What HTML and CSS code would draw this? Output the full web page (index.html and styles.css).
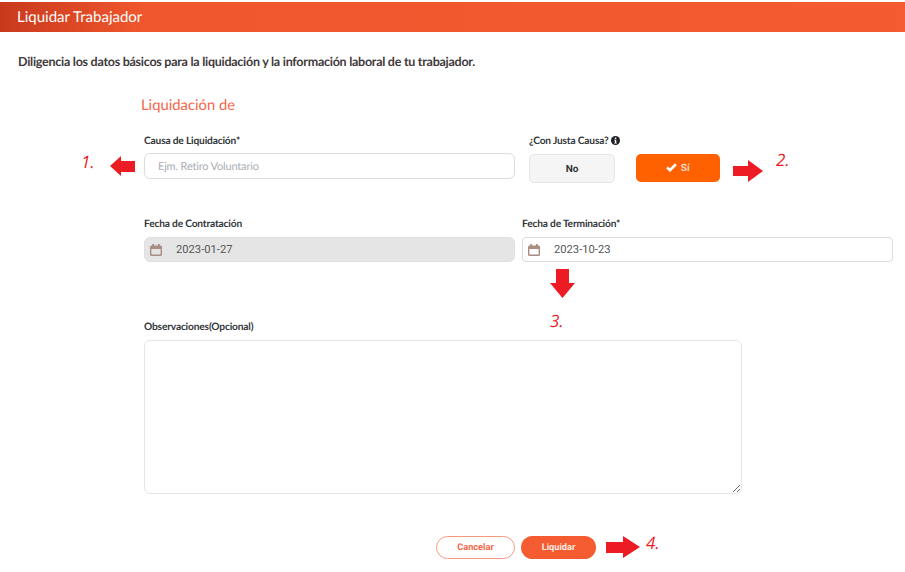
FILE: index.html
```html
<!DOCTYPE html>
<html lang="es">
<head>
    <meta charset="UTF-8">
    <meta name="viewport" content="width=device-width, initial-scale=1.0">
    <title>Liquidar Trabajador</title>
    <link rel="stylesheet" href="styles.css">
</head>
<body>
    <div class="page">
        <header class="top-bar">Liquidar Trabajador</header>
        <p class="intro">Diligencia los datos básicos para la liquidación y la información laboral de tu trabajador.</p>
        <h2 class="section-title">Liquidación de</h2>

        <form class="form">
            <div class="row row-cause">
                <div class="field field-half">
                    <label class="label">Causa de Liquidación*</label>
                    <input class="input" type="text" placeholder="Ejm. Retiro Voluntario">
                </div>
                <div class="field">
                    <label class="label">¿Con Justa Causa?
                        <svg class="info-icon" viewBox="0 0 16 16"><circle cx="8" cy="8" r="8" fill="#222"/><rect x="6.8" y="2.8" width="2.6" height="2.6" fill="#fff"/><path d="M5.8 6.6h3.6v5.2h1v1.6H5.8v-1.6h1v-3.6h-1z" fill="#fff"/></svg>
                    </label>
                    <div class="toggle">
                        <button type="button" class="toggle-no">No</button>
                        <button type="button" class="toggle-yes">
                            <svg class="check-icon" viewBox="0 0 14 11"><path d="M1.4 5.4l3.6 3.6L12.6 1.4" fill="none" stroke="#fff" stroke-width="3.4"/></svg>
                            Sí
                        </button>
                    </div>
                </div>
            </div>

            <div class="row row-dates">
                <div class="field field-half">
                    <label class="label">Fecha de Contratación</label>
                    <div class="date-box disabled">
                        <svg class="cal-icon" viewBox="0 0 12 12"><path d="M1.5 1.6h.7V0h1.900v1.600h3.800V0h1.900v1.600h.7q1.500 0 1.500 1.500v7.400q0 1.500-1.500 1.500h-9Q0 12 0 10.500V3.100q0-1.500 1.500-1.500zM1.400 5v5.100q0 .5.5 .5h8.200q.5 0 .5-.5V5z" fill="#a98d80"/></svg>
                        <input class="date-input" type="text" value="2023-01-27" readonly>
                    </div>
                </div>
                <div class="field field-half">
                    <label class="label">Fecha de Terminación*</label>
                    <div class="date-box">
                        <svg class="cal-icon" viewBox="0 0 12 12"><path d="M1.5 1.6h.7V0h1.900v1.600h3.800V0h1.900v1.600h.7q1.500 0 1.500 1.500v7.400q0 1.500-1.500 1.500h-9Q0 12 0 10.500V3.100q0-1.500 1.500-1.500zM1.400 5v5.100q0 .5.5 .5h8.200q.5 0 .5-.5V5z" fill="#a98d80"/></svg>
                        <input class="date-input" type="text" value="2023-10-23">
                    </div>
                </div>
            </div>

            <div class="field">
                <label class="label">Observaciones(Opcional)</label>
                <textarea class="textarea"></textarea>
            </div>

            <div class="actions">
                <button type="button" class="btn btn-outline">Cancelar</button>
                <button type="button" class="btn btn-fill">Liquidar</button>
            </div>
        </form>

        <!-- red notes drawn over the screenshot -->
        <span class="note note-1">1.</span>
        <svg class="arrow arrow-1" viewBox="0 0 25 20"><polygon points="0,10 11,0 11,5 25,5 25,16 11,16 11,20"/></svg>
        <span class="note note-2">2.</span>
        <svg class="arrow arrow-2" viewBox="0 0 30 22"><polygon points="30,11 15,0 15,6 0,6 0,16 15,16 15,22"/></svg>
        <svg class="arrow arrow-3" viewBox="0 0 25 29"><polygon points="12.5,29 0,14 6,14 6,0 19,0 19,14 25,14"/></svg>
        <span class="note note-3">3.</span>
        <svg class="arrow arrow-4" viewBox="0 0 34 22"><polygon points="34,11 17,0 17,6 0,6 0,17 17,17 17,22"/></svg>
        <span class="note note-4">4.</span>
    </div>
</body>
</html>
```

FILE: styles.css
```css
* {
    box-sizing: border-box;
    text-rendering: geometricPrecision;
}

body {
    margin: 0;
    background-color: #fff;
    font-family: "Lato", "Liberation Sans", sans-serif;
    color: #3a3a3a;
}

.page {
    position: relative;
    width: 905px;
    height: 572px;
    padding-top: 2px;
    overflow: hidden;
}

.top-bar {
    height: 30px;
    padding-left: 17px;
    line-height: 30px;
    font-size: 15px;
    color: #fff;
    background: linear-gradient(90deg, #c8391c 0%, #f0572e 16%, #f45b30 100%);
}

.intro {
    margin: 21px 0 0 18px;
    font-size: 12.5px;
    letter-spacing: -0.26px;
    line-height: 17px;
    font-weight: 700;
    color: #41393b;
}

.section-title {
    margin: 25px 0 0 141px;
    font-size: 14.8px;
    line-height: 20px;
    font-weight: 400;
    color: #f4664a;
}

.form {
    margin: 18px 0 0 144px;
}

.row {
    display: flex;
}

.row-cause {
    gap: 14px;
    height: 83px;
}

.row-dates {
    gap: 7px;
    height: 103px;
}

.field {
    display: flex;
    flex-direction: column;
}

.field-half {
    width: 371px;
}

.label {
    height: 16px;
    margin-bottom: 6px;
    padding-top: 1px;
    font-size: 10.2px;
    letter-spacing: -0.17px;
    line-height: 15px;
    font-weight: 700;
    color: #33363a;
}

.row-dates .label, .form > .field .label {
    margin-bottom: 5px;
}

.info-icon {
    width: 9px;
    height: 9px;
    vertical-align: -1px;
}

.input {
    width: 100%;
    height: 26px;
    margin-top: -2px;
    padding: 0 13px;
    border: 1px solid #dcdcdc;
    border-radius: 6px;
    font-family: inherit;
    font-size: 11px;
    letter-spacing: -0.18px;
    outline: none;
}

.input::placeholder {
    color: #a9adb3;
    opacity: 1;
}

.toggle {
    display: flex;
    gap: 21px;
    margin-top: -1px;
}

.toggle button {
    height: 28px;
    padding-top: 2px;
    font-family: "Roboto", "Liberation Sans", sans-serif;
    font-size: 10px;
    font-weight: 700;
    border-radius: 5px;
}

.toggle-no {
    width: 86px;
    height: 29px !important;
    background-color: #f5f5f5;
    border: 1px solid #e6e6e6;
    color: #333;
}

.toggle-yes {
    width: 84px;
    background-color: #ff6000;
    border: 0;
    color: #f8dccb;
}

.check-icon {
    width: 11px;
    height: 9px;
    margin-right: 1px;
    vertical-align: -1px;
}

.date-box {
    display: flex;
    align-items: center;
    gap: 14px;
    height: 25px;
    padding-left: 5px;
    border: 1px solid #dcdcdc;
    border-radius: 4px;
}

.date-box.disabled {
    background-color: #e5e5e5;
    border-color: #e0e0e0;
    border-radius: 6px;
}

.cal-icon {
    width: 12px;
    height: 12px;
    flex: none;
}

.date-input {
    flex: 1;
    min-width: 0;
    padding: 0;
    border: 0;
    outline: none;
    background: transparent;
    font-family: "Roboto", "Liberation Sans", sans-serif;
    font-size: 11.2px;
    color: #555;
}

.textarea {
    display: block;
    width: 598px;
    height: 154px;
    border: 1px solid #e6e6e6;
    border-radius: 6px;
    outline: none;
}

.actions {
    display: flex;
    gap: 6px;
    margin: 42px 0 0 292px;
}

.btn {
    height: 23px;
    padding: 0;
    border-radius: 12px;
    font-family: "Roboto", "Liberation Sans", sans-serif;
    font-size: 9.2px;
    font-weight: 700;
}

.btn-outline {
    width: 79px;
    background-color: #fff;
    border: 1px solid #f79a80;
    color: #f4664a;
}

.btn-fill {
    width: 75px;
    background-color: #f45b30;
    border: 0;
    color: #fdece5;
}

/* annotations sit on top of the form */
.note {
    position: absolute;
    font-family: "Open Sans", "Liberation Sans", sans-serif;
    font-style: italic;
    font-size: 17px;
    line-height: 18px;
    color: #ed1c24;
}

.note-1 { left: 81px; top: 153px; }
.note-2 { left: 776px; top: 151px; }
.note-3 { left: 550px; top: 312px; }
.note-4 { left: 646px; top: 534px; }

.arrow {
    position: absolute;
    fill: #ed1c24;
}

.arrow-1 { left: 110px; top: 156px; width: 25px; height: 20px; }
.arrow-2 { left: 733px; top: 160px; width: 30px; height: 22px; }
.arrow-3 { left: 550px; top: 269px; width: 25px; height: 29px; }
.arrow-4 { left: 606px; top: 536px; width: 34px; height: 22px; }
```
